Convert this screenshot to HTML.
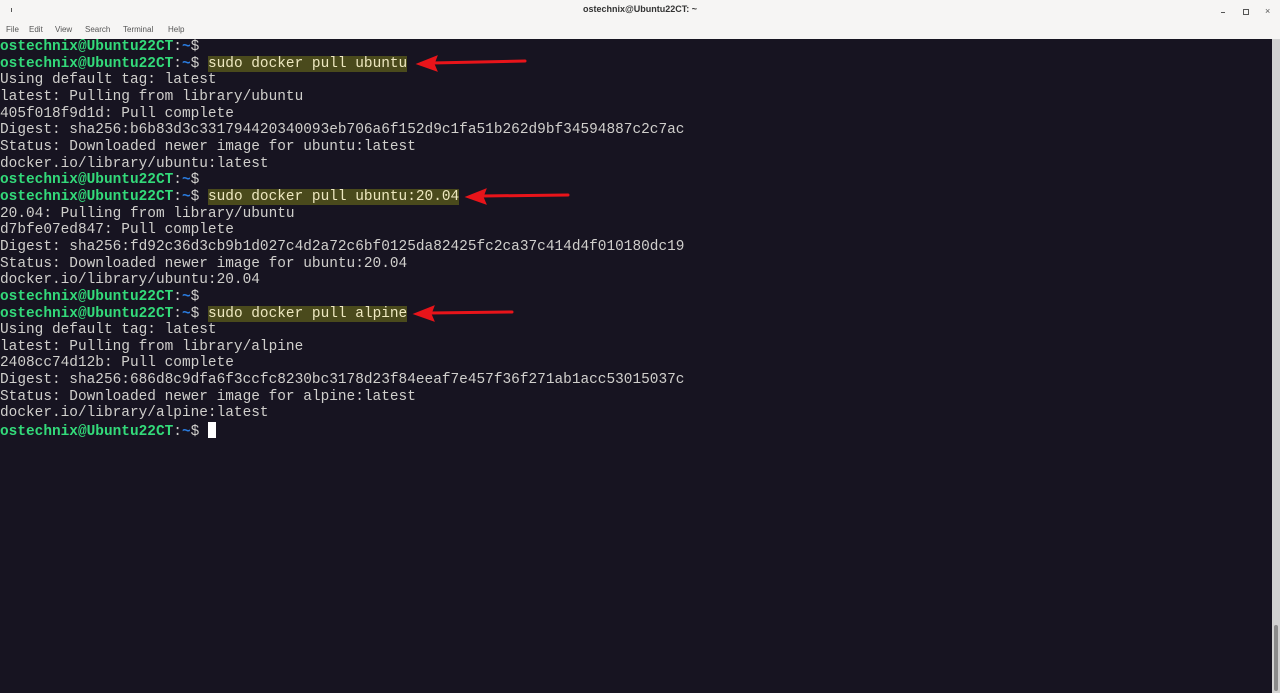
<!DOCTYPE html>
<html><head><style>
html,body{margin:0;padding:0;width:1280px;height:693px;overflow:hidden;background:#171421;}
.tb{position:absolute;left:0;top:0;width:1280px;height:22px;background:#f6f5f4;}
.title{position:absolute;top:4px;left:0;width:1280px;text-align:center;font:9px "Liberation Sans",sans-serif;color:#333;}
.menu{position:absolute;left:0;top:22px;width:1280px;height:17px;background:#f6f5f4;font:8px "Liberation Sans",sans-serif;color:#555;}
.menu span{position:absolute;top:3px}
.term{position:absolute;left:0;top:39px;width:1272px;height:654px;font:14.45px/16.65px "Liberation Mono",monospace;color:#d0cfcc;white-space:pre;}
.g{color:#33da7a;font-weight:bold}
.b{color:#2a7bde;font-weight:bold}
.h{background:#4a4a1c;color:#eee8c0}
.cur{display:inline-block;width:8px;height:16px;background:#fff;vertical-align:-3px}
.sb{position:absolute;left:1272px;top:39px;width:8px;height:654px;background:#d1d1d1}
.th{position:absolute;left:1274px;top:625px;width:4px;height:66px;background:#8a8a8a;border-radius:2px}
</style></head><body>
<div class="tb"><div class="title"><b>ostechnix@Ubuntu22CT: ~</b></div>
<div style="position:absolute;left:11px;top:8px;width:1px;height:4px;background:#555"></div>
<div style="position:absolute;left:1221px;top:12px;width:4px;height:1px;background:#555"></div>
<div style="position:absolute;left:1243px;top:9px;width:4px;height:4px;border:1px solid #555"></div>
<div style="position:absolute;left:1265px;top:6px;font:9px sans-serif;color:#555">×</div>
</div>
<div class="menu"><span style="left:6px">File</span><span style="left:29px">Edit</span><span style="left:55px">View</span><span style="left:85px">Search</span><span style="left:123px">Terminal</span><span style="left:168px">Help</span></div>
<div class="term"><span class="g">ostechnix@Ubuntu22CT</span>:<span class="b">~</span>$
<span class="g">ostechnix@Ubuntu22CT</span>:<span class="b">~</span>$ <span class="h">sudo docker pull ubuntu</span>
Using default tag: latest
latest: Pulling from library/ubuntu
405f018f9d1d: Pull complete
Digest: sha256:b6b83d3c331794420340093eb706a6f152d9c1fa51b262d9bf34594887c2c7ac
Status: Downloaded newer image for ubuntu:latest
docker.io/library/ubuntu:latest
<span class="g">ostechnix@Ubuntu22CT</span>:<span class="b">~</span>$
<span class="g">ostechnix@Ubuntu22CT</span>:<span class="b">~</span>$ <span class="h">sudo docker pull ubuntu:20.04</span>
20.04: Pulling from library/ubuntu
d7bfe07ed847: Pull complete
Digest: sha256:fd92c36d3cb9b1d027c4d2a72c6bf0125da82425fc2ca37c414d4f010180dc19
Status: Downloaded newer image for ubuntu:20.04
docker.io/library/ubuntu:20.04
<span class="g">ostechnix@Ubuntu22CT</span>:<span class="b">~</span>$
<span class="g">ostechnix@Ubuntu22CT</span>:<span class="b">~</span>$ <span class="h">sudo docker pull alpine</span>
Using default tag: latest
latest: Pulling from library/alpine
2408cc74d12b: Pull complete
Digest: sha256:686d8c9dfa6f3ccfc8230bc3178d23f84eeaf7e457f36f271ab1acc53015037c
Status: Downloaded newer image for alpine:latest
docker.io/library/alpine:latest
<span class="g">ostechnix@Ubuntu22CT</span>:<span class="b">~</span>$ <span class="cur"></span></div>
<svg style="position:absolute;left:0;top:0" width="1280" height="693">
<g fill="#e8141a" stroke="#e8141a" stroke-linecap="round">
<path d="M432 63 L525 61" stroke-width="3"/><path d="M417 64 L437 56 L434 64 L437 71 Z"/>
<path d="M482 196 L568 195" stroke-width="3"/><path d="M466 197 L486 189 L483 197 L486 204 Z"/>
<path d="M430 313 L512 312" stroke-width="3"/><path d="M414 314 L434 306 L431 314 L434 321 Z"/>
</g></svg>
<div class="sb"></div><div class="th"></div>
</body></html>
